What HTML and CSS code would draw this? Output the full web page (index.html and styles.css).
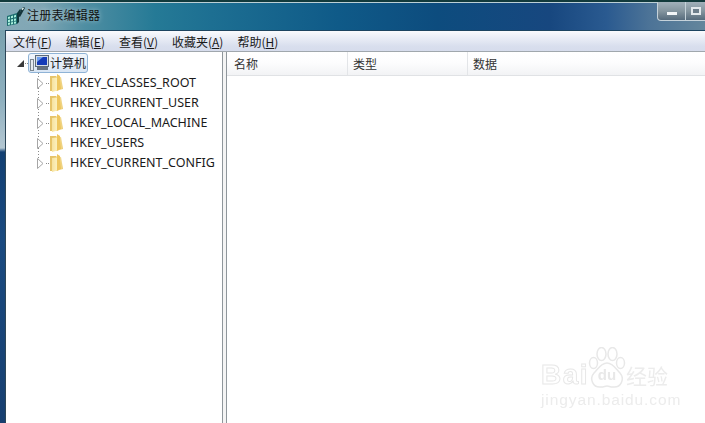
FILE: index.html
```html
<!DOCTYPE html>
<html lang="zh-CN">
<head>
<meta charset="utf-8">
<title>注册表编辑器</title>
<link rel="stylesheet" href="styles.css">
</head>
<body>
<div class="window">
  <header class="titlebar">
    <svg class="app-icon" width="20" height="22" viewBox="0 0 20 22">
      <path d="M1 11l10-3v11l-10 2z" fill="#1e6f70"/>
      <path d="M2 12l2-.6v2.200l-2 .4zM5 11.200l2-.6v2.200l-2 .4zM8 10.400l2-.6V12l-2 .4zM2 15l2-.4v2.200l-2 .4zM5 14.400l2-.4v2.200l-2 .4zM8 13.800l2-.4v2.200l-2 .4zM2 18l2-.4v2l-2 .4zM5 17.400l2-.4v2l-2 .4zM8 16.800l2-.4v2l-2 .4z" fill="#a9efdc"/>
      <path d="M11 8l3-4 1 1-2 5v7l-2 2z" fill="#10393c"/>
      <path d="M12 11l4-8 2-1 1 1-5 9z" fill="#14343a"/>
      <path d="M15.500 4l1.500-1.500 1 .7-1.500 2z" fill="#e6f4ef"/>
    </svg>
    <span class="title">注册表编辑器</span>
    <div class="caption-buttons">
      <span class="cap-btn"><i class="min-glyph"></i></span>
      <span class="cap-btn cap-max"><i class="max-glyph"></i></span>
    </div>
  </header>
  <div class="inner">
    <nav class="menubar">
      <span class="menu">文件(<u>F</u>)</span>
      <span class="menu">编辑(<u>E</u>)</span>
      <span class="menu">查看(<u>V</u>)</span>
      <span class="menu">收藏夹(<u>A</u>)</span>
      <span class="menu">帮助(<u>H</u>)</span>
    </nav>
    <div class="panes">
      <aside class="tree">
        <div class="root-row">
          <svg class="root-arrow" width="7" height="7" viewBox="0 0 7 7"><path d="M0 7h7V0z" fill="#3a3a3a"/></svg>
          <span class="dots-h short"></span>
          <span class="root-sel">
            <svg class="pc-icon" width="20" height="18" viewBox="0 0 20 18">
              <rect x=".5" y="5.500" width="3" height="11" fill="#e3e9ef" stroke="#7c8790"/>
              <rect x="5.500" y="1.500" width="13" height="11" fill="#d4dce5" stroke="#5c6a78"/>
              <rect x="7" y="3" width="10" height="8" fill="#143bb8"/>
              <path d="M7 3h6l-6 5z" fill="#6fa0ee"/>
              <rect x="7" y="13" width="11" height="3" fill="#667280"/>
            </svg>
            <span class="root-label">计算机</span>
          </span>
        </div>
        <ul class="keys">
          <li class="key"><svg class="arrow" width="7" height="11" viewBox="0 0 7 11"><path d="M.5.500l5.500 5-5.500 5z" fill="#fff" stroke="#a6a6a6"/></svg><span class="dots-h"></span><svg class="folder" width="16" height="18" viewBox="0 0 16 18"><use href="#fld"/></svg><span class="key-label">HKEY_CLASSES_ROOT</span></li>
          <li class="key"><svg class="arrow" width="7" height="11" viewBox="0 0 7 11"><path d="M.5.500l5.500 5-5.500 5z" fill="#fff" stroke="#a6a6a6"/></svg><span class="dots-h"></span><svg class="folder" width="16" height="18" viewBox="0 0 16 18"><use href="#fld"/></svg><span class="key-label">HKEY_CURRENT_USER</span></li>
          <li class="key"><svg class="arrow" width="7" height="11" viewBox="0 0 7 11"><path d="M.5.500l5.500 5-5.500 5z" fill="#fff" stroke="#a6a6a6"/></svg><span class="dots-h"></span><svg class="folder" width="16" height="18" viewBox="0 0 16 18"><use href="#fld"/></svg><span class="key-label">HKEY_LOCAL_MACHINE</span></li>
          <li class="key"><svg class="arrow" width="7" height="11" viewBox="0 0 7 11"><path d="M.5.500l5.500 5-5.500 5z" fill="#fff" stroke="#a6a6a6"/></svg><span class="dots-h"></span><svg class="folder" width="16" height="18" viewBox="0 0 16 18"><use href="#fld"/></svg><span class="key-label">HKEY_USERS</span></li>
          <li class="key"><svg class="arrow" width="7" height="11" viewBox="0 0 7 11"><path d="M.5.500l5.500 5-5.500 5z" fill="#fff" stroke="#a6a6a6"/></svg><span class="dots-h"></span><svg class="folder" width="16" height="18" viewBox="0 0 16 18"><use href="#fld"/></svg><span class="key-label">HKEY_CURRENT_CONFIG</span></li>
        </ul>
      </aside>
      <div class="splitter"></div>
      <main class="list">
        <div class="list-head">
          <span class="col col-name">名称</span>
          <span class="col col-type">类型</span>
          <span class="col col-data">数据</span>
        </div>
      </main>
    </div>
  </div>
  <div class="watermark">
    <div class="wm-top">
      <span class="wm-bai">Bai</span>
      <svg class="wm-paw" width="38" height="43" viewBox="0 0 38 43" fill="none" stroke="#e8e8e8" stroke-width="1.500">
        <ellipse cx="13.500" cy="7" rx="4.500" ry="6.500"/>
        <ellipse cx="24.500" cy="7" rx="4.500" ry="6.500"/>
        <ellipse cx="5.500" cy="16" rx="4" ry="5.500"/>
        <ellipse cx="32.500" cy="16" rx="4" ry="5.500"/>
        <path d="M19 16c6 0 9 6 13 10 5 6 1 15-7 14-3 0-4-1-6-1s-3 1-6 1c-8 1-12-8-7-14 4-4 7-10 13-10z"/>
        <text x="19" y="33" font-size="15" font-family="Liberation Sans, sans-serif" font-weight="700" fill="#e8e8e8" stroke="none" text-anchor="middle">du</text>
      </svg>
      <span class="wm-cn">经验</span>
    </div>
    <div class="wm-url">jingyan.baidu.com</div>
  </div>
</div>
<svg class="defs" width="0" height="0">
  <defs>
    <linearGradient id="fg" x1="0" y1="0" x2="1" y2="0">
      <stop offset="0" stop-color="#f6e3a0"/>
      <stop offset=".55" stop-color="#fdf3c4"/>
      <stop offset="1" stop-color="#e9c565"/>
    </linearGradient>
    <g id="fld">
      <path d="M1 2h6l1 1v14H1z" fill="#e6c46a"/>
      <path d="M3 4l9-1 2 12-11 3z" fill="url(#fg)"/>
      <path d="M8 0l3 2 1 13-4 2z" fill="#eec65f"/>
    </g>
  </defs>
</svg>
</body>
</html>
```

FILE: styles.css
```css
* { box-sizing: border-box; }
html, body { margin: 0; height: 100%; overflow: hidden; background: #fff; }
ul { list-style: none; margin: 0; padding: 0; }
.defs { position: absolute; }

.window {
  position: relative;
  width: 705px;
  height: 423px;
  display: flex;
  flex-direction: column;
  background: linear-gradient(180deg, #6f9aa8 0, #8fb0bf 100px, #b4c7d2 148px, #123f72 152px, #1a4a80 240px, #173f70 423px);
  font-family: "Noto Sans CJK SC", "Liberation Sans", sans-serif;
  color: #1a1a1a;
}

.titlebar {
  position: relative;
  height: 30px;
  flex: none;
  display: flex;
  align-items: center;
  padding: 0 0 0 6px;
  border-top: 2px solid #123a3c;
  background: linear-gradient(90deg, #86aab8 0%, #7fa6b4 6%, #4f8ea2 12%, #257a96 22%, #1d6f92 30%, #0f5a88 48%, #0d4c7e 62%, #17477f 78%, #2a5a90 86%, #4c7397 92%, #64869c 100%);
  box-shadow: inset 0 1px 0 #bcd0d6;
}
.app-icon { flex: none; margin: -1px 1px 0 0; }
.title { font-size: 12px; color: #111; letter-spacing: 0.200px; margin-top: -4px; text-shadow: 0 0 5px rgba(255,255,255,.55); }
.caption-buttons {
  position: absolute;
  top: 0;
  right: 0;
  display: flex;
}
.cap-btn {
  width: 29px;
  height: 19px;
  display: flex;
  align-items: center;
  justify-content: center;
  background: linear-gradient(180deg, #a2b1bb 0%, #84959f 50%, #566b7c 100%);
  border: 1px solid #c5d2da;
  border-top: 0;
  border-radius: 0 0 0 4px;
}
.cap-max { border-radius: 0; border-left: 0; width: 19px; border-right: 0; }
.min-glyph { display: block; width: 10px; height: 3px; margin-top: 5px; background: #f2f5f7; }
.max-glyph { display: block; width: 10px; height: 8px; border: 2px solid #e2e8ec; background: #6d7e8b; }

.inner {
  flex: 1;
  min-height: 0;
  margin-left: 5px;
  display: flex;
  flex-direction: column;
  border-left: 1px solid #2c4658;
  border-top: 1px solid #1d4560;
  background: #fff;
}
.menubar {
  height: 21px;
  flex: none;
  display: flex;
  align-items: center;
  padding-left: 7px;
  gap: 14px;
  font-size: 12px;
  border-bottom: 1px solid #a0a7ad;
  background: linear-gradient(180deg, #fafbfd 0%, #eef1f8 25%, #d9dfee 75%, #d6dcec 100%);
}
.menu u { text-underline-offset: 1px; }

.panes { flex: 1; min-height: 0; display: flex; }
.tree {
  width: 216px;
  flex: none;
  padding: 1px 0 0 0;
  background: #fff;
  font-family: "Noto Sans", "Liberation Sans", sans-serif;
}
.root-row { height: 20px; display: flex; align-items: center; padding-left: 11px; }
.root-arrow { flex: none; }
.dots-h.short { width: 3px; margin-left: 1px; margin-right: 0; }
.root-sel {
  display: flex;
  align-items: center;
  height: 20px;
  width: 60px;
  padding: 0 0 0 1px;
  border: 1px solid #8fb3d6;
  border-radius: 3px;
  background: linear-gradient(180deg, #f1f6fc, #d8e5f4);
}
.pc-icon { flex: none; margin-right: 0; }
.root-label { font-family: "Noto Sans CJK SC", sans-serif; font-size: 12px; margin-top: -2px; }
.keys {
  background: repeating-linear-gradient(180deg, #8a8a8a 0 1px, transparent 1px 3px) 32px 0 / 1px 92px no-repeat;
}
.key { height: 20px; display: flex; align-items: center; padding-left: 31px; }
.arrow { flex: none; }
.dots-h {
  flex: none;
  width: 4px;
  margin-left: 2px;
  height: 1px;
  background: repeating-linear-gradient(90deg, #8a8a8a 0 1px, transparent 1px 2px);
}
.folder { flex: none; margin: 0 5px 0 -1px; }
.key-label { font-size: 12.500px; white-space: nowrap; margin-top: -1px; }

.splitter {
  width: 5px;
  flex: none;
  background: #f4f4f4;
  border-left: 1px solid #8f969b;
  border-right: 1px solid #8f969b;
}
.list { flex: 1; min-width: 0; background: #fff; }
.list-head {
  height: 24px;
  display: flex;
  align-items: center;
  font-size: 12px;
  color: #333;
  border-bottom: 1px solid #e0e2e5;
  background: linear-gradient(180deg, #fff 0%, #fdfdfe 45%, #f2f3f5 100%);
}
.col { display: flex; align-items: center; height: 100%; padding-left: 5px; border-right: 1px solid #e3e5e8; }
.col-name { width: 121px; padding-left: 7px; }
.col-type { width: 120px; }
.col-data { width: 120px; border-right: 0; }

.watermark {
  position: absolute;
  left: 541px;
  top: 347px;
  width: 130px;
  filter: blur(.4px);
}
.wm-top { display: flex; align-items: flex-end; height: 43px; }
.wm-bai { font: 700 28px/24px "Liberation Sans", sans-serif; color: #fff; -webkit-text-stroke: 1px #e8e8e8; letter-spacing: 1.500px; margin-bottom: 3px; }
.wm-paw { flex: none; margin-left: -1px; }
.wm-cn { font: 400 21px/26px "Noto Sans CJK SC", sans-serif; color: #ececec; margin-bottom: 2px; }
.wm-url { font: 400 15.500px/17px "Liberation Sans", sans-serif; color: #ececec; letter-spacing: 0.900px; margin-top: 1px; white-space: nowrap; }
```
